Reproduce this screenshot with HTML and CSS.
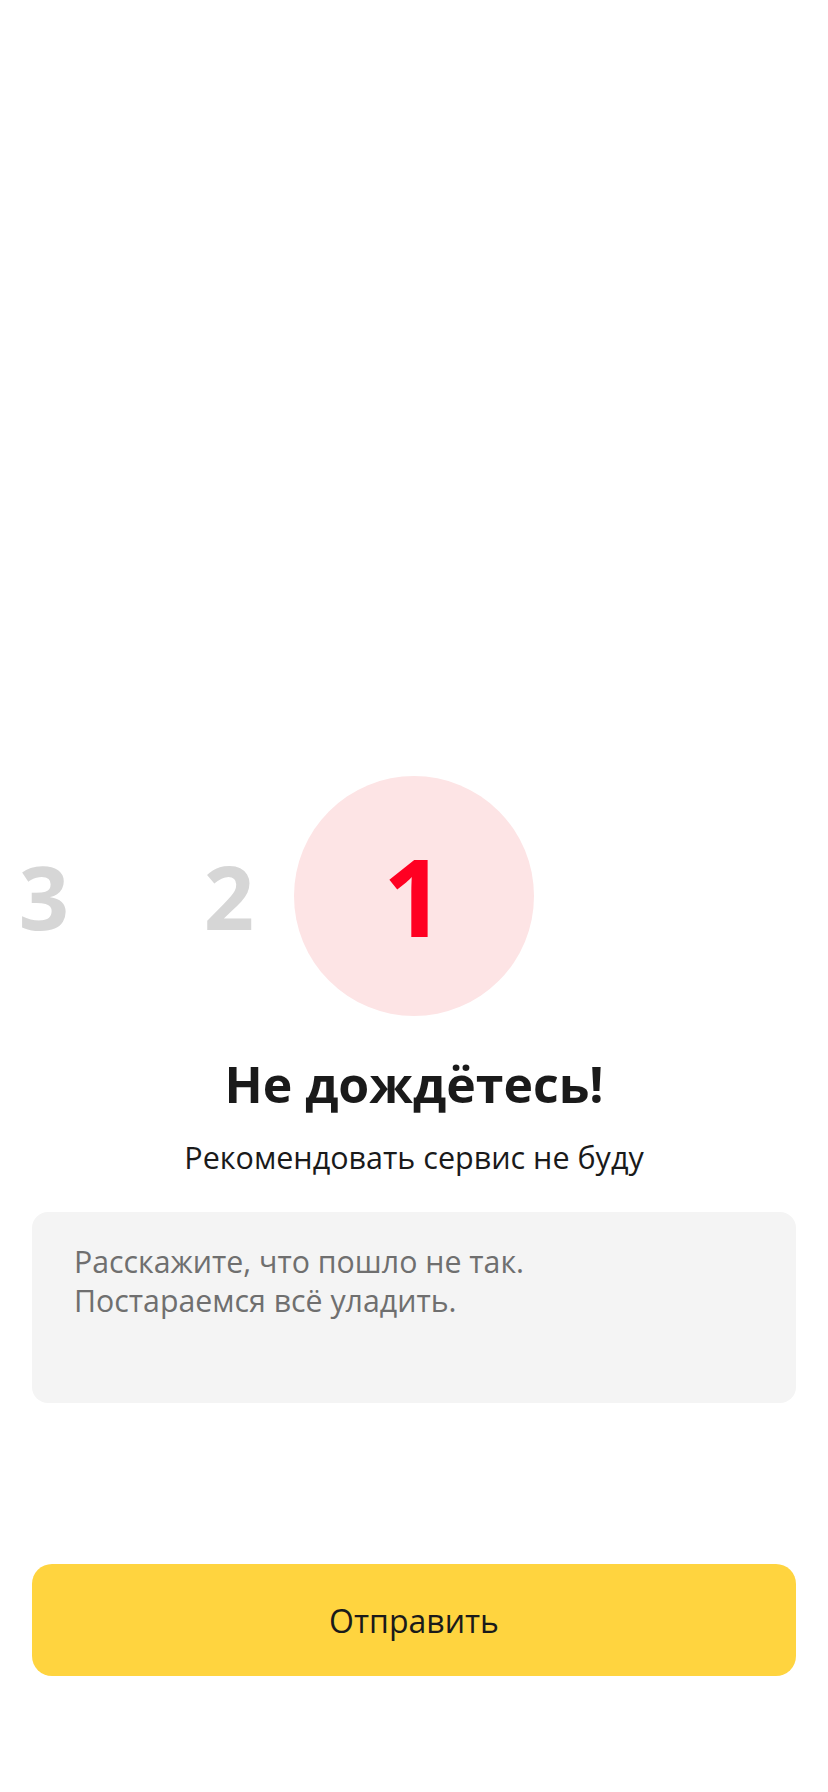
FILE: index.html
```html
<!DOCTYPE html>
<html lang="ru">
<head>
<meta charset="utf-8">
<link rel="stylesheet" href="styles.css">
</head>
<body>
<main class="screen">
  <div class="scale">
    <div class="item"><span class="digit">3</span></div>
    <div class="item"><span class="digit">2</span></div>
    <div class="item"><span class="circle"><span class="digit active">1</span></span></div>
    <div class="item"></div>
    <div class="item"></div>
  </div>
  <h1 class="title">Не дождётесь!</h1>
  <p class="subtitle">Рекомендовать сервис не буду</p>
  <div class="field">
    <p class="placeholder">Расскажите, что пошло не так.<br>Постараемся всё уладить.</p>
  </div>
  <button class="submit">Отправить</button>
</main>
</body>
</html>
```
FILE: styles.css
```css
* { box-sizing: border-box; }
html, body { margin: 0; padding: 0; background: #fff; }
body { width: 828px; height: 1792px; overflow: hidden; font-family: "Open Sans", "Noto Sans", sans-serif; color: #1a1a1a; }
.screen { display: flex; flex-direction: column; align-items: stretch; padding-top: 776px; height: 1792px; }
.scale { display: flex; justify-content: center; height: 240px; overflow: hidden; }
.item { flex: 0 0 185px; min-width: 0; display: flex; justify-content: center; align-items: center; }
.circle { flex: 0 0 240px; width: 240px; height: 240px; border-radius: 50%; background: #fde4e5; display: flex; justify-content: center; align-items: center; }
.digit { font-size: 88px; font-weight: 700; color: #d6d6d6; line-height: 1; }
.digit.active { font-size: 108px; color: #ff0022; }
.title { margin: 38px 0 0; text-align: center; font-size: 50px; font-weight: 700; line-height: 60px; }
.subtitle { margin: 25px 0 0; text-align: center; font-size: 30.5px; line-height: 36px; }
.field { margin: 37px 32px 0; height: 191px; background: #f4f4f4; border-radius: 16px; padding: 30px 42px; }
.placeholder { margin: 0; font-size: 30.3px; line-height: 39px; color: #6f6f6f; }
.submit { margin: 161px 32px 0; height: 112px; border: 0; border-radius: 20px; background: #ffd43f; font-family: inherit; font-size: 32px; color: #1a1a1a; }
```
